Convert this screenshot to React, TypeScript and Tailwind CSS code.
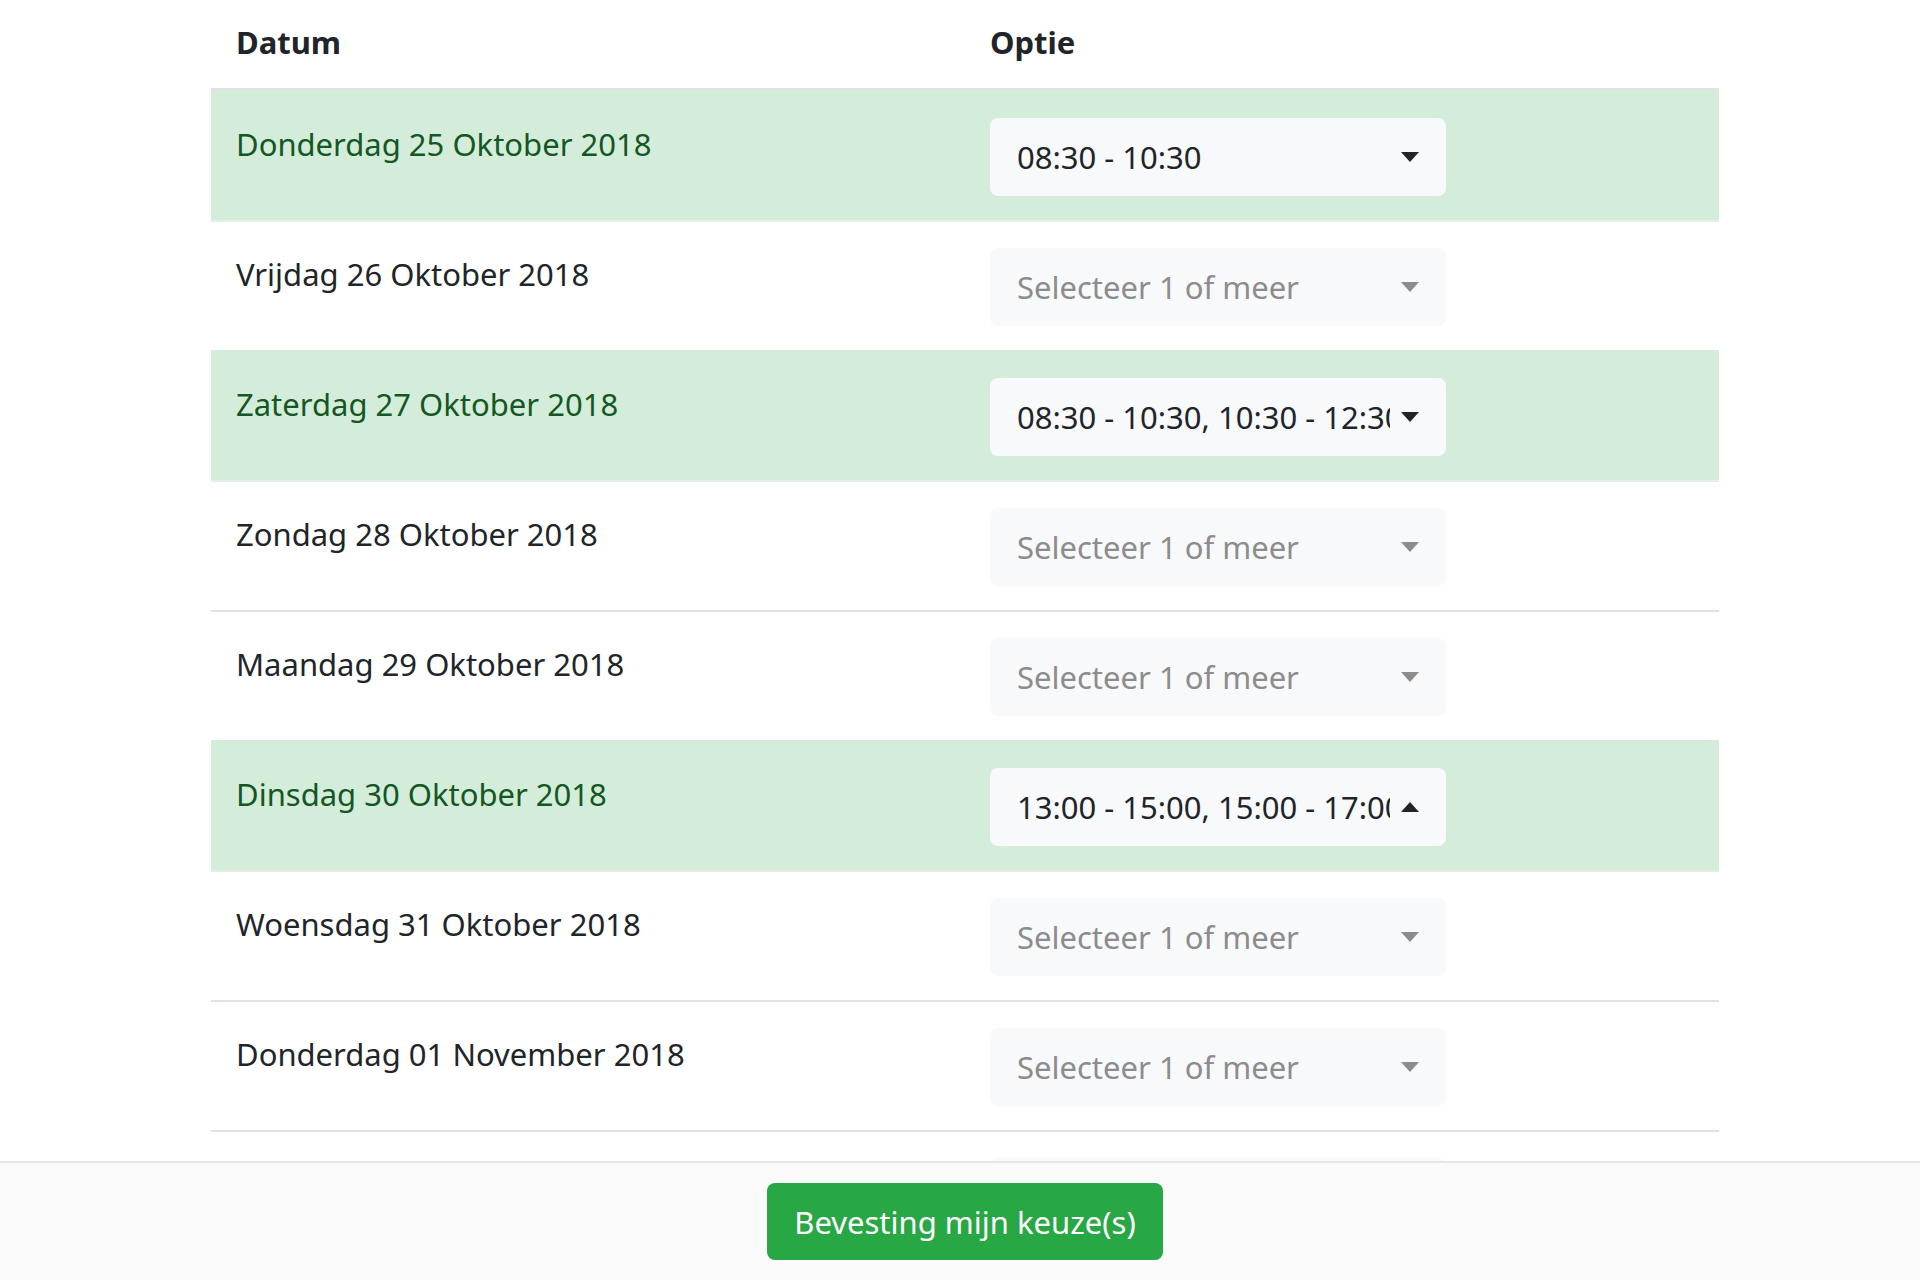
import React from 'react';

type Row = {
  date: string;
  value?: string;
  open?: boolean;
};

const rows: Row[] = [
  { date: 'Donderdag 25 Oktober 2018', value: '08:30 - 10:30' },
  { date: 'Vrijdag 26 Oktober 2018' },
  { date: 'Zaterdag 27 Oktober 2018', value: '08:30 - 10:30, 10:30 - 12:30' },
  { date: 'Zondag 28 Oktober 2018' },
  { date: 'Maandag 29 Oktober 2018' },
  { date: 'Dinsdag 30 Oktober 2018', value: '13:00 - 15:00, 15:00 - 17:00', open: true },
  { date: 'Woensdag 31 Oktober 2018' },
  { date: 'Donderdag 01 November 2018' },
  { date: 'Vrijdag 02 November 2018' },
  { date: 'Zaterdag 03 November 2018' },
];

const Caret = ({ up, muted }: { up?: boolean; muted?: boolean }) => (
  <svg
    className={`w-[18px] h-[10px] shrink-0 ${muted ? 'text-[#8c8c8c]' : 'text-[#212529]'}`}
    viewBox="0 0 18 10"
    fill="currentColor"
  >
    {up ? <path d="M0 10 L9 0 L18 10 Z" /> : <path d="M0 0 L18 0 L9 10 Z" />}
  </svg>
);

const OptionSelect = ({ value, open }: { value?: string; open?: boolean }) => (
  <button
    type="button"
    className="flex items-center w-[456px] h-[78px] pl-[27px] pr-[27px] rounded-[8px] bg-[#f8f9fa] text-left"
  >
    <span
      className={`flex-1 min-w-0 mr-[11px] overflow-hidden whitespace-nowrap ${
        value ? 'text-[#212529]' : 'text-[#8c8c8c]'
      }`}
    >
      {value ?? 'Selecteer 1 of meer'}
    </span>
    <Caret up={open} muted={!value} />
  </button>
);

export default function App() {
  return (
    <div
      className="min-h-screen bg-white pb-[140px] text-[31px] leading-[48px] text-[#212529]"
      style={{ fontFamily: '"Noto Sans", "Open Sans", sans-serif' }}
    >
      <div className="ml-[211px] w-[1508px]">
        {/* header */}
        <div className="grid grid-cols-2 h-[90px] border-b-2 border-[#dee2e6] font-bold">
          <div className="pl-[25px] pt-[18px]">Datum</div>
          <div className="pl-[25px] pt-[18px]">Optie</div>
        </div>

        {rows.map((r, i) => {
          const chosen = !!r.value;
          const prevChosen = i > 0 && !!rows[i - 1].value;
          let border = 'border-[#dee2e6]';
          if (i === 0 || chosen) border = 'border-[#d4edda]';
          else if (prevChosen) border = 'border-[#e4f0e7]';
          return (
            <div
              key={r.date}
              className={`grid grid-cols-2 h-[130px] border-t-2 ${border} ${
                chosen ? 'bg-[#d4edda] text-[#155724]' : ''
              }`}
            >
              <div className="pl-[25px] pt-[28px]">{r.date}</div>
              <div className="pl-[25px] pt-[26px]">
                <OptionSelect value={r.value} open={r.open} />
              </div>
            </div>
          );
        })}
      </div>

      <div className="fixed bottom-0 left-0 right-0 h-[119px] flex items-center justify-center bg-[#fafafa] border-t-2 border-[#e6e6e6]">
        <button
          type="button"
          className="ml-[10px] h-[77px] px-[27px] rounded-[8px] bg-[#28a745] text-white"
        >
          Bevesting mijn keuze(s)
        </button>
      </div>
    </div>
  );
}
